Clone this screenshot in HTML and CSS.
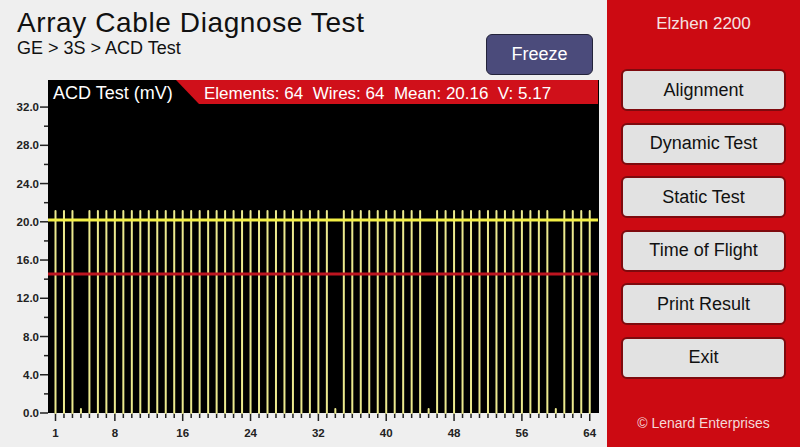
FILE: index.html
```html
<!DOCTYPE html>
<html lang="en">
<head>
 <meta charset="UTF-8">
 <meta name="viewport" content="width=device-width, initial-scale=1.0">
 <title>Array Cable Diagnose Test</title>
 <link rel="stylesheet" href="styles.css">
</head>
<body>
 <div class="screen">
 <main class="main">
 <header class="top">
 <div class="titles">
 <h1>Array Cable Diagnose Test</h1>
 <p class="crumbs">GE &gt; 3S &gt; ACD Test</p>
 </div>
 <button class="freeze">Freeze</button>
 </header>
 <svg class="chart" id="chart" width="607" height="367" viewBox="0 80 607 367">
 <rect x="48" y="80" width="551" height="333" fill="#000"/>
 <polygon points="176,80 598,80 598,104 199,104" fill="#d0101a"/>
 <text class="plot-title" x="53" y="99">ACD Test (mV)</text>
 <text class="plot-stats" x="204" y="99">Elements: 64  Wires: 64  Mean: 20.16  V: 5.17</text>
 <g id="yaxis"></g>
 <g id="xaxis"></g>
 <g id="bars"></g>
 <line x1="48" y1="220" x2="598" y2="220" stroke="#f4f046" stroke-width="3"/>
 <line x1="48" y1="274" x2="598" y2="274" stroke="#bd1520" stroke-width="3"/>
 </svg>
 </main>
 <aside class="side">
 <div class="model">Elzhen 2200</div>
 <nav class="menu">
 <button>Alignment</button>
 <button>Dynamic Test</button>
 <button>Static Test</button>
 <button>Time of Flight</button>
 <button>Print Result</button>
 <button>Exit</button>
 </nav>
 <div class="copy">&copy; Lenard Enterprises</div>
 </aside>
 </div>
 <script>
 document.addEventListener('DOMContentLoaded', function() {
 const ns = 'http://www.w3.org/2000/svg';
 const yaxis = document.getElementById('yaxis');
 const xaxis = document.getElementById('xaxis');
 const bars = document.getElementById('bars');
 const zero = 413;
 const unit = 9.56;
 const missing = [4, 34, 45, 60];
 const labels = [1, 8, 16, 24, 32, 40, 48, 56, 64];

 function add(parent, tag, attrs, text) {
 const el = document.createElementNS(ns, tag);
 for (const k in attrs) el.setAttribute(k, attrs[k]);
 if (text) el.textContent = text;
 parent.appendChild(el);
 return el;
 }

 // y axis: major every 4, minor every 2
 for (let v = 0; v <= 32; v += 2) {
 const y = zero - v * unit;
 const major = v % 4 === 0;
 add(yaxis, 'line', { x1: major ? 40 : 44, y1: y, x2: 48, y2: y, class: 'tick' });
 if (major) add(yaxis, 'text', { x: 39, y: y + 4, class: 'ylabel' }, v.toFixed(1));
 }

 // bars and x ticks
 for (let i = 1; i <= 64; i++) {
 const x = 55.5 + (i - 1) * 8.48;
 const top = missing.includes(i) ? 409 : 211;
 add(bars, 'line', { x1: x, y1: zero, x2: x, y2: top, class: 'bar' });
 const long = labels.includes(i);
 add(xaxis, 'line', { x1: x, y1: zero, x2: x, y2: long ? 421 : 418, class: 'tick' });
 if (long) add(xaxis, 'text', { x: x, y: 437, class: 'xlabel' }, String(i));
 }
 });
 </script>
</body>
</html>
```

FILE: styles.css
```css
body {
margin: 0;
padding: 0;
font-family: 'Liberation Sans', Arial, sans-serif;
background-color: #efefef;
}
.screen {
display: flex;
width: 800px;
height: 447px;
overflow: hidden;
}
.main {
width: 607px;
flex: none;
background-color: #efefef;
}
.top {
display: flex;
justify-content: space-between;
align-items: flex-start;
height: 80px;
}
.titles {
padding: 7px 0 0 17px;
color: #111;
}
h1 {
margin: 0;
font-size: 28px;
font-weight: normal;
letter-spacing: 0.6px;
line-height: 31px;
}
.crumbs {
margin: 0;
font-size: 18px;
line-height: 20px;
}
.freeze {
margin: 34px 14px 0 0;
width: 107px;
height: 41px;
background-color: #4b4b7b;
color: #fff;
border: 1px solid #23233a;
border-radius: 6px;
font-family: inherit;
font-size: 18px;
cursor: pointer;
}
.chart {
display: block;
}
.plot-title {
fill: #fff;
font-size: 18px;
}
.plot-stats {
fill: #fff;
font-size: 17px;
white-space: pre;
}
.tick {
stroke: #222;
stroke-width: 1.5;
}
.bar {
stroke: #ecea8e;
stroke-width: 2;
stroke-linecap: round;
}
.ylabel {
fill: #222;
font-size: 11.5px;
font-weight: bold;
text-anchor: end;
}
.xlabel {
fill: #222;
font-size: 11.5px;
font-weight: bold;
text-anchor: middle;
}
.side {
flex: 1;
display: flex;
flex-direction: column;
align-items: center;
background-color: #cc0a12;
padding: 14px 14px 16px;
}
.model {
color: #f6e2e2;
font-size: 17px;
line-height: 20px;
margin-bottom: 35px;
}
.menu {
display: flex;
flex-direction: column;
gap: 11.6px;
width: 100%;
}
.menu button {
height: 42px;
background-color: #e2e2e2;
color: #111;
border: 2px solid #7e0a0e;
border-radius: 6px;
font-family: inherit;
font-size: 18px;
cursor: pointer;
}
.copy {
margin-top: auto;
color: #f4d8d8;
font-size: 14px;
line-height: 16px;
}
```
